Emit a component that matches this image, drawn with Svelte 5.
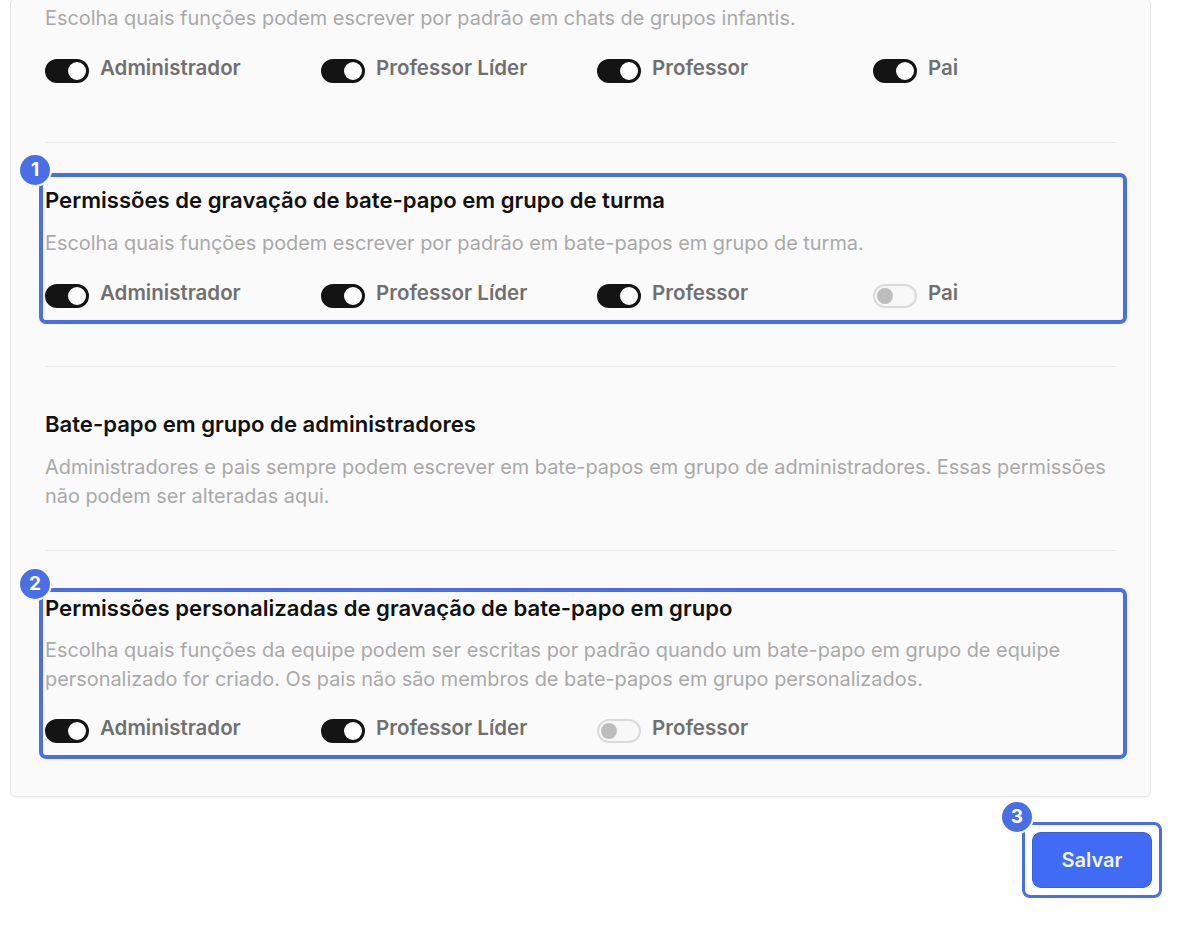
<script>
  const sections = [
    {
      desc: ['Escolha quais funções podem escrever por padrão em chats de grupos infantis.'],
      toggles: [['Administrador', true], ['Professor Líder', true], ['Professor', true], ['Pai', true]]
    },
    {
      mark: 1,
      title: 'Permissões de gravação de bate-papo em grupo de turma',
      desc: ['Escolha quais funções podem escrever por padrão em bate-papos em grupo de turma.'],
      toggles: [['Administrador', true], ['Professor Líder', true], ['Professor', true], ['Pai', false]]
    },
    {
      title: 'Bate-papo em grupo de administradores',
      desc: [
        'Administradores e pais sempre podem escrever em bate-papos em grupo de administradores. Essas permissões',
        'não podem ser alteradas aqui.'
      ],
      toggles: []
    },
    {
      mark: 2,
      title: 'Permissões personalizadas de gravação de bate-papo em grupo',
      desc: [
        'Escolha quais funções da equipe podem ser escritas por padrão quando um bate-papo em grupo de equipe',
        'personalizado for criado. Os pais não são membros de bate-papos em grupo personalizados.'
      ],
      toggles: [['Administrador', true], ['Professor Líder', true], ['Professor', false]]
    }
  ];
</script>

<div class="page">
  <div class="card">
    {#each sections as section}
      <section class="section">
        <div class="block" class:marked={section.mark}>
          {#if section.mark}
            <div class="outline"></div>
            <div class="badge">{section.mark}</div>
          {/if}
          {#if section.title}
            <h3>{section.title}</h3>
          {/if}
          <p>
            {#each section.desc as line}
              <span>{line}</span>
            {/each}
          </p>
          {#if section.toggles.length}
            <div class="toggles">
              {#each section.toggles as [label, on]}
                <div class="toggle-item">
                  <span class="switch" class:on></span>
                  <span class="label">{label}</span>
                </div>
              {/each}
            </div>
          {/if}
        </div>
      </section>
    {/each}
  </div>

  <div class="actions">
    <div class="save-wrap">
      <div class="outline"></div>
      <div class="badge">3</div>
      <button type="button">Salvar</button>
    </div>
  </div>
</div>

<style>
  :global(body) {
    background: #fff;
    font-family: Inter, 'Liberation Sans', sans-serif;
  }

  .page {
    height: 937px;
    overflow: hidden;
    padding: 0 48px 0 10px;
    box-sizing: border-box;
  }

  .card {
    margin: -2px 1px 0 0;
    padding: 5px 34px 38px;
    background: #fafafa;
    border: 1px solid #e6e6e6;
    border-radius: 6px;
    box-shadow: 0 1px 2px rgba(0, 0, 0, 0.04);
  }

  .section {
    border-bottom: 1px solid #e9e9e9;
    padding: 43px 0 58px;
  }

  .section:first-child {
    padding-top: 0;
    padding-bottom: 59px;
  }

  .section:nth-child(3) {
    padding-bottom: 39px;
  }

  .section:last-child {
    border-bottom: 0;
    padding-bottom: 15px;
  }

  .section:last-child h3 {
    margin-bottom: 14px;
  }

  .section:last-child .toggles {
    margin-top: 25px;
  }

  .block {
    position: relative;
  }

  .outline {
    position: absolute;
    inset: -13px -11px -16px -6px;
    border: 4px solid #4a6ee6;
    border-radius: 7px;
    pointer-events: none;
  }

  .section:last-child .outline {
    top: -6px;
  }

  .badge {
    position: absolute;
    left: -25px;
    top: -31px;
    width: 30px;
    height: 30px;
    border-radius: 50%;
    background: #4a6ee6;
    box-shadow: 0 0 0 2px #fafafa;
    color: #fff;
    font-size: 19px;
    font-weight: 700;
    line-height: 30px;
    text-align: center;
  }

  .section:last-child .badge {
    top: -25px;
  }

  h3 {
    margin: 0 0 15px;
    color: #111;
    font-size: 22.1px;
    font-weight: 600;
    line-height: 28px;
  }

  p {
    margin: 0;
    color: #a9a9a9;
    font-size: 19.9px;
    line-height: 29px;
  }

  p span {
    display: block;
    white-space: nowrap;
  }

  .toggles {
    display: grid;
    grid-template-columns: repeat(4, 276px);
    margin-top: 26px;
  }

  .toggle-item {
    display: flex;
    align-items: flex-start;
    gap: 11px;
    height: 24px;
  }

  .switch {
    position: relative;
    width: 44px;
    height: 24px;
    flex-shrink: 0;
    box-sizing: border-box;
    border: 2px solid #dadada;
    border-radius: 12px;
    background: #f8f8f8;
  }

  .switch::after {
    content: '';
    position: absolute;
    left: 2px;
    top: 2px;
    width: 16px;
    height: 16px;
    border-radius: 50%;
    background: #bdbdbd;
  }

  .switch.on {
    border-color: #141414;
    background: #141414;
  }

  .switch.on::after {
    left: auto;
    right: 1px;
    top: 1px;
    width: 18px;
    height: 18px;
    background: #fff;
  }

  .label {
    margin-top: -3px;
    color: #707070;
    font-size: 20.5px;
    font-weight: 600;
    line-height: 24px;
    white-space: nowrap;
  }

  .actions {
    display: flex;
    justify-content: flex-end;
    margin-top: 35px;
  }

  .save-wrap {
    position: relative;
    display: flex;
  }

  .save-wrap .outline {
    inset: -10px;
    border-width: 3px;
    border-radius: 8px;
  }

  .save-wrap .badge {
    left: -30px;
    top: -30px;
    box-shadow: 0 0 0 2px #fff;
  }

  button {
    width: 120px;
    height: 56px;
    border: 1px solid #3a5fd8;
    border-radius: 9px;
    background: #3f6bf5;
    color: #f2f5ff;
    font-family: inherit;
    font-size: 20px;
    font-weight: 600;
  }
</style>
